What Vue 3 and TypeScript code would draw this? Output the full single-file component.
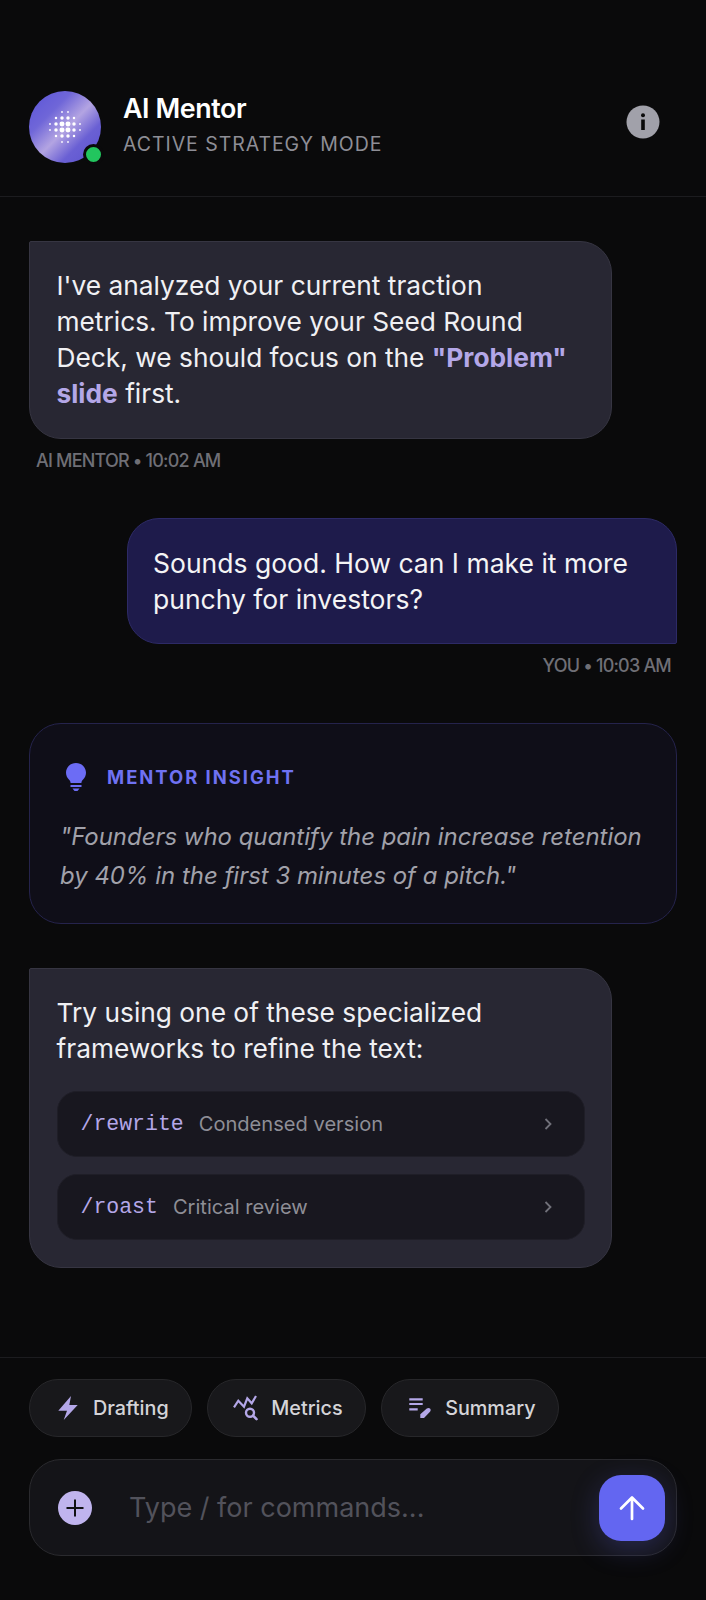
<script setup lang="ts">
interface Dot {
  x: number;
  y: number;
  r: number;
}

// halftone dots of the avatar, bigger toward the middle
const dots: Dot[] = [];
for (const row of [-15, -9, -3, 3, 9, 15]) {
  for (const col of [-15, -9, -3, 3, 9, 15]) {
    const d = Math.sqrt(row * row + col * col);
    if (d > 16) continue;
    dots.push({ x: 18 + col, y: 18 + row, r: 3.1 - d * 0.145 });
  }
}

const options = [
  { cmd: '/rewrite', label: 'Condensed version' },
  { cmd: '/roast', label: 'Critical review' },
];
</script>

<template>
  <div class="screen">
    <header class="header">
      <div class="avatar">
        <svg width="36" height="36" viewBox="0 0 36 36">
          <circle v-for="(d, i) in dots" :key="i" :cx="d.x" :cy="d.y" :r="d.r" fill="#fff" />
        </svg>
        <span class="status"></span>
      </div>
      <div class="who">
        <div class="name">AI Mentor</div>
        <div class="mode">ACTIVE STRATEGY MODE</div>
      </div>
      <svg class="info" width="34" height="34" viewBox="0 0 34 34">
        <circle cx="17" cy="17" r="16.5" fill="#a1a1aa" />
        <circle cx="17" cy="10.2" r="2" fill="#0a0a0b" />
        <rect x="15.2" y="14.5" width="3.6" height="10.5" fill="#0a0a0b" />
      </svg>
    </header>

    <main class="thread">
      <div class="bubble ai first">
        I've analyzed your current traction metrics. To improve your Seed Round Deck, we should focus on the
        <strong>"Problem" slide</strong> first.
      </div>
      <div class="meta">AI MENTOR • 10:02 AM</div>

      <div class="bubble me">Sounds good. How can I make it more punchy for investors?</div>
      <div class="meta right">YOU • 10:03 AM</div>

      <section class="insight">
        <div class="insight-head">
          <svg width="24" height="30" viewBox="0 0 24 30">
            <path d="M12 1C6.500 1 2 5.200 2 10.800c0 3 1.400 5.200 2.900 6.800 1 1 1.600 2 1.700 3.400h10.800c.1-1.400.7-2.400 1.700-3.400 1.500-1.600 2.900-3.800 2.900-6.800C22 5.200 17.500 1 12 1z" fill="#6c6cf5" />
            <rect x="6.500" y="23" width="11" height="2" fill="#6c6cf5" />
            <path d="M8.500 26.500h7l-2 2.500h-3z" fill="#6c6cf5" />
          </svg>
          <span>MENTOR INSIGHT</span>
        </div>
        <p class="quote">"Founders who quantify the pain increase retention by 40% in the first 3 minutes of a pitch."</p>
      </section>

      <div class="bubble ai options-bubble">
        Try using one of these specialized frameworks to refine the text:
        <div class="options">
          <div v-for="o in options" :key="o.cmd" class="option">
            <code>{{ o.cmd }}</code>
            <span class="label">{{ o.label }}</span>
            <svg class="chev" width="10" height="14" viewBox="0 0 10 14">
              <path d="M2.500 2l5 5-5 5" fill="none" stroke="#71717a" stroke-width="1.800" />
            </svg>
          </div>
        </div>
      </div>
    </main>

    <footer class="footer">
      <div class="chips">
        <div class="chip">
          <svg width="26" height="26" viewBox="0 0 26 26">
            <path d="M16 1L3.300 15.700H12L8.700 25 22.700 10H14.300z" fill="#b4a7e8" />
          </svg>
          Drafting
        </div>
        <div class="chip">
          <svg width="26" height="26" viewBox="0 0 26 26">
            <path d="M1 12.300l4.300-6.600 5.700 6 3.300-8.400 4.400 5L23 1" fill="none" stroke="#b4a7e8" stroke-width="2.200" />
            <circle cx="17" cy="17.700" r="4" fill="none" stroke="#b4a7e8" stroke-width="2.400" />
            <path d="M20 20.700l3.500 3.500" stroke="#b4a7e8" stroke-width="2.600" stroke-linecap="round" />
          </svg>
          Metrics
        </div>
        <div class="chip">
          <svg width="26" height="26" viewBox="0 0 26 26">
            <path d="M2.300 4.300h13.400M2.300 9h13.400M2.300 14.300h8.400" stroke="#b4a7e8" stroke-width="2.200" />
            <path d="M13.300 23v-3.700l6.500-5.700c1-.9 2.300-.9 3.200 0 .9 1 .9 2.200 0 3.200L17 23z" fill="#b4a7e8" />
          </svg>
          Summary
        </div>
      </div>
      <div class="composer">
        <svg class="plus" width="36" height="36" viewBox="0 0 36 36">
          <circle cx="18" cy="18" r="17" fill="#c0b4ee" />
          <path d="M18 9.500v17M9.500 18h17" stroke="#111114" stroke-width="2" />
        </svg>
        <span class="placeholder">Type / for commands...</span>
        <button class="send" type="button">
          <svg width="26" height="26" viewBox="0 0 26 26">
            <path d="M13 24V2.500M2 13.500L13 2.500l11 11" fill="none" stroke="#fff" stroke-width="2.700" stroke-linecap="round" stroke-linejoin="round" />
          </svg>
        </button>
      </div>
    </footer>
  </div>
</template>

<style scoped>
.screen {
  width: 706px;
  height: 1600px;
  background: #0a0a0b;
  display: flex;
  flex-direction: column;
  font-family: Inter, "Noto Sans", sans-serif;
  color: #f4f4f5;
  box-sizing: border-box;
}
.header {
  display: flex;
  align-items: center;
  padding: 91px 46px 33px 29px;
  border-bottom: 1px solid #1c1c1f;
}
.avatar {
  position: relative;
  width: 72px;
  height: 72px;
  border-radius: 50%;
  background: linear-gradient(135deg, #5a54d8 0%, #6f66d8 30%, #b3a4e2 52%, #6a60d4 72%, #5b52cf 100%);
  display: flex;
  align-items: center;
  justify-content: center;
}
.status {
  position: absolute;
  right: -3px;
  bottom: -2px;
  width: 15px;
  height: 15px;
  border-radius: 50%;
  background: #22c55e;
  border: 3px solid #0a0a0b;
}
.who {
  flex: 1;
  margin-left: 22px;
  margin-top: -6px;
}
.name {
  font-size: 26.800px;
  font-weight: 600;
  line-height: 34px;
  letter-spacing: -0.4px;
  color: #fff;
}
.mode {
  font-size: 19.500px;
  line-height: 28px;
  letter-spacing: 0.95px;
  color: #8e8e96;
  margin-top: 5px;
}
.info {
  flex: none;
  margin-top: -10px;
}
.thread {
  flex: 1;
  padding: 44px 29px 0;
  display: flex;
  flex-direction: column;
}
.bubble {
  box-sizing: border-box;
  font-size: 26.300px;
  line-height: 36px;
  padding: 26px 26.500px;
}
.ai {
  width: 583px;
  background: #282733;
  border: 1px solid #363542;
  border-radius: 2px 32px 32px 32px;
  color: #f0f0f3;
}
.ai strong {
  color: #b4a7e8;
  font-weight: 700;
}
.me {
  width: 550px;
  align-self: flex-end;
  background: #1e1b4b;
  border: 1px solid #2d2a66;
  border-radius: 32px 32px 2px 32px;
  padding: 26px 25px;
  font-size: 26.500px;
}
.meta {
  font-size: 18px;
  font-weight: 500;
  line-height: 24px;
  color: #6f6f76;
  margin: 10px 0 45px 7px;
  letter-spacing: -0.8px;
}
.meta.right {
  text-align: right;
  margin: 10px 6px 45px 0;
}
.insight {
  box-sizing: border-box;
  height: 201px;
  border: 1px solid #25234c;
  border-radius: 32px;
  background: #0f0e18;
  padding: 38px 28px 38px 30px;
}
.insight-head {
  display: flex;
  align-items: center;
  gap: 19px;
  color: #6f72f2;
  font-size: 18.400px;
  font-weight: 700;
  letter-spacing: 2px;
  padding-left: 4px;
}
.quote {
  margin: 25px 0 0;
  font-size: 23.950px;
  line-height: 39px;
  font-style: italic;
  color: #a1a1aa;
}
.options-bubble {
  margin-top: 44px;
  height: 300px;
}
.options {
  margin-top: 24px;
  display: flex;
  flex-direction: column;
  gap: 17px;
}
.option {
  height: 66px;
  background: #18171f;
  border: 1px solid #1f1e27;
  border-radius: 20px;
  box-sizing: border-box;
  display: flex;
  align-items: center;
  padding: 0 31px 0 23px;
}
.option code {
  font-family: "Liberation Mono", monospace;
  font-size: 21.500px;
  color: #b4a7e8;
}
.option .label {
  flex: 1;
  margin-left: 15px;
  font-size: 20.100px;
  color: #8e8e96;
}
.footer {
  border-top: 1px solid #1c1c1f;
  padding: 21px 29px 44px;
}
.chips {
  display: flex;
  gap: 15px;
}
.chip {
  height: 58px;
  box-sizing: border-box;
  padding: 0 22.500px 0 25px;
  display: flex;
  align-items: center;
  gap: 12px;
  border: 1px solid #27272a;
  border-radius: 29px;
  background: #18181b;
  font-size: 19.800px;
  font-weight: 500;
  color: #d4d4d8;
}
.composer {
  margin-top: 22px;
  height: 97px;
  box-sizing: border-box;
  border: 1px solid #2a2a2e;
  border-radius: 32px;
  background: #141418;
  display: flex;
  align-items: center;
  padding: 0 11px 0 27px;
}
.plus {
  flex: none;
}
.placeholder {
  flex: 1;
  margin-left: 36px;
  font-size: 27px;
  color: #52525b;
}
.send {
  width: 66px;
  height: 66px;
  border: 0;
  border-radius: 22px;
  background: #6366f1;
  display: flex;
  align-items: center;
  justify-content: center;
  box-shadow: 0 8px 28px rgba(99, 102, 241, 0.25);
}
</style>
